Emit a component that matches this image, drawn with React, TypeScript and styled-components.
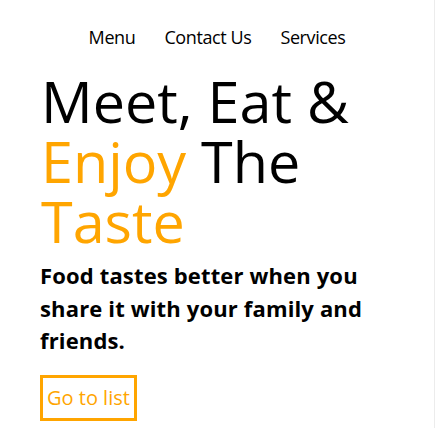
import React from "react";
import styled, { createGlobalStyle } from "styled-components";

const Global = createGlobalStyle`
  html, body { margin: 0; padding: 0; background: #fff; }
  body { font-family: "Open Sans", "Noto Sans", sans-serif; color: #000; }
`;

const Page = styled.div`
  min-height: 100vh;
  box-sizing: border-box;
  border-right: 1px solid #ececec;
  width: 435px;
`;

const Nav = styled.nav`
  display: flex;
  justify-content: center;
  gap: 29px;
  padding-top: 25px;
`;

const NavLink = styled.a`
  font-size: 18px;
  line-height: 24px;
  color: #000;
  text-decoration: none;
  letter-spacing: -0.4px;
`;

const Hero = styled.section`
  padding: 22px 40px 0 40px;
`;

const Title = styled.h1`
  margin: 0;
  font-weight: 400;
  font-size: 57.5px;
  line-height: 60px;
  padding-left: 1px;
`;

const Accent = styled.span`
  color: #ffa500;
`;

const Lead = styled.p`
  margin: 8px 0 0 0;
  font-weight: 700;
  font-size: 22px;
  line-height: 32.5px;
  letter-spacing: 0.15px;
  max-width: 345px;
`;

const Button = styled.button`
  margin-top: 18px;
  border: 3px solid #ffa500;
  background: #fff;
  color: #ffa500;
  font-family: inherit;
  font-size: 20px;
  line-height: 27px;
  padding: 6px 4px 7px 4px;
  cursor: pointer;
`;

export default function App() {
  return (
    <>
      <Global />
      <Page>
        <Nav>
          <NavLink href="#">Menu</NavLink>
          <NavLink href="#">Contact Us</NavLink>
          <NavLink href="#">Services</NavLink>
        </Nav>
        <Hero>
          <Title>
            Meet, Eat &amp; <Accent>Enjoy</Accent> The <Accent>Taste</Accent>
          </Title>
          <Lead>Food tastes better when you share it with your family and friends.</Lead>
          <Button>Go to list</Button>
        </Hero>
      </Page>
    </>
  );
}
